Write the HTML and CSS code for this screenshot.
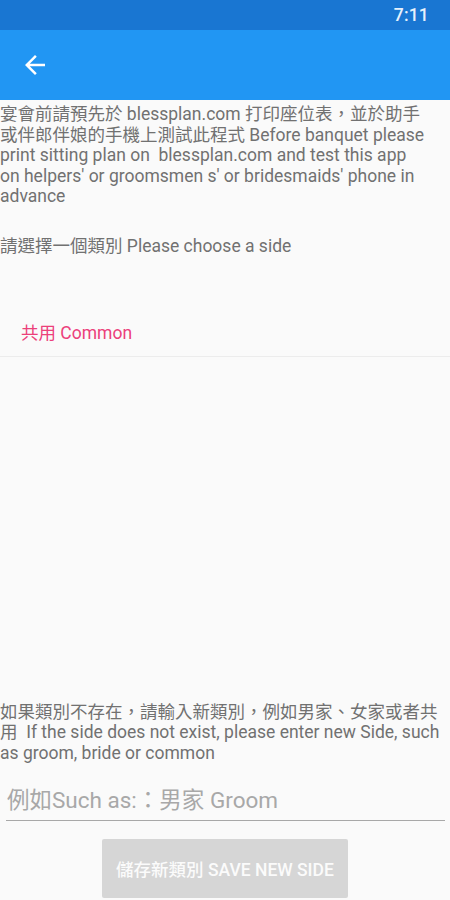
FILE: index.html
```html
<!DOCTYPE html>
<html lang="zh-Hant">
<head>
<meta charset="utf-8">
<title>Choose side</title>
<link rel="stylesheet" href="styles.css">
</head>
<body>
<div class="screen">
  <div class="status-bar"><span class="time">7:11</span></div>
  <header class="app-bar">
    <svg class="back" viewBox="0 0 24 24" width="30" height="30" aria-hidden="true"><path d="M20 11H7.83l5.59-5.59L12 4l-8 8 8 8 1.41-1.41L7.830 13H20v-2z" fill="#fff"/></svg>
  </header>
  <main class="content">
    <p class="text intro">宴會前請預先於 blessplan.com 打印座位表，並於助手或伴郎伴娘的手機上測試此程式 Before banquet please print sitting plan on&nbsp; blessplan.com and test this app on helpers' or groomsmen s' or bridesmaids' phone in advance</p>
    <p class="text choose">請選擇一個類別 Please choose a side</p>
    <ul class="side-list">
      <li class="side-item">共用 Common</li>
    </ul>
    <div class="spacer"></div>
    <p class="text hint">如果類別不存在，請輸入新類別，例如男家、女家或者共用&nbsp; If the side does not exist, please enter new Side, such as groom, bride or common</p>
    <input class="side-input" type="text" placeholder="例如Such as:：男家 Groom">
    <div class="btn-row"><button class="save-btn" type="button">儲存新類別 SAVE NEW SIDE</button></div>
  </main>
</div>
</body>
</html>
```

FILE: styles.css
```css
* { box-sizing: border-box; }
html, body {
  margin: 0;
  padding: 0;
  background: #fafafa;
}
body {
  font-family: Roboto, "Noto Sans CJK TC", "Noto Sans", sans-serif;
}
.screen {
  width: 450px;
  height: 900px;
  display: flex;
  flex-direction: column;
  overflow: hidden;
}
.status-bar {
  height: 30px;
  flex: none;
  background: #1976d2;
  display: flex;
  align-items: center;
  justify-content: flex-end;
  padding-right: 21px;
}
.time {
  color: #e6f1fc;
  font-size: 17.5px;
  font-weight: 500;
  letter-spacing: 0.2px;
}
.app-bar {
  height: 70px;
  flex: none;
  background: #2196f3;
  display: flex;
  align-items: center;
  padding-left: 20px;
}
.back { display: block; }
.content {
  flex: 1;
  display: flex;
  flex-direction: column;
  min-height: 0;
}
.text {
  margin: 0;
  color: #717171;
  font-size: 17.5px;
  line-height: 20.5px;
}
.intro {
  margin-top: 4px;
  padding-right: 20px;
}
.choose { margin-top: 29px; }
.side-list {
  list-style: none;
  margin: 50px 0 0;
  padding: 0;
}
.side-item {
  height: 51px;
  display: flex;
  align-items: center;
  padding-left: 21px;
  color: #ec407a;
  font-size: 17.5px;
  border-bottom: 1px solid #ececec;
}
.spacer { flex: 1; }
.hint { margin: 0; }
.side-input {
  display: block;
  margin: 17px 5px 0 6px;
  width: calc(100% - 11px);
  height: 41px;
  border: none;
  border-bottom: 1.5px solid #a8a8a8;
  background: transparent;
  padding: 0 0 0 1px;
  font-family: Roboto, "Noto Sans CJK TC", sans-serif;
  font-size: 22.5px;
  color: #333;
  outline: none;
}
.side-input::placeholder { color: #a8a8a8; }
.btn-row {
  display: flex;
  justify-content: center;
  margin: 18px 0 2px;
}
.save-btn {
  width: 246px;
  height: 59px;
  border: none;
  border-radius: 2px;
  background: #d6d6d6;
  color: #fbfbfb;
  font-family: Roboto, "Noto Sans CJK TC", sans-serif;
  font-size: 17.5px;
  font-weight: 500;
  padding: 0;
}
```
